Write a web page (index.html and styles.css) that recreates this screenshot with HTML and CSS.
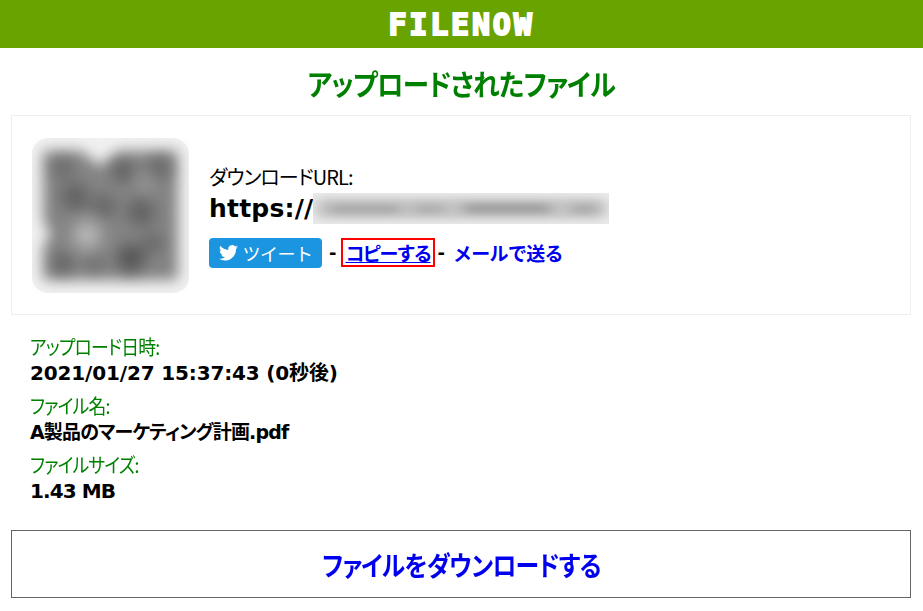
FILE: index.html
```html
<!DOCTYPE html>
<html lang="ja">
<head>
    <meta charset="UTF-8">
    <title>FILENOW - アップロードされたファイル</title>
    <link rel="stylesheet" href="styles.css">
</head>
<body>

<header class="site-header">
    <span class="logo">FILENOW</span>
</header>

<h1 class="page-title"><span>アップロードされたファイル</span></h1>

<section class="url-card">
    <div class="qr-thumb">
        <svg width="157" height="155" viewBox="0 0 157 155">
            <defs>
                <filter id="blur-qr" x="-20%" y="-20%" width="140%" height="140%">
                    <feGaussianBlur stdDeviation="7"/>
                </filter>
                <filter id="blur-spot" x="-50%" y="-50%" width="200%" height="200%">
                    <feGaussianBlur stdDeviation="8"/>
                </filter>
            </defs>
            <rect width="157" height="155" rx="16" fill="#f1f1f1"/>
            <g filter="url(#blur-qr)">
                <path fill="#848484" d="M11 13H50L68 28L86 13H146V142H11V108L19 96L11 84Z"/>
            </g>
            <g filter="url(#blur-spot)">
                <circle cx="55" cy="97" r="14" fill="#b8b8b8"/>
                <circle cx="31" cy="30" r="10" fill="#666666"/>
                <circle cx="91" cy="33" r="10" fill="#585858"/>
                <circle cx="127" cy="30" r="11" fill="#666666"/>
                <circle cx="43" cy="59" r="14" fill="#626262"/>
                <circle cx="72" cy="68" r="11" fill="#626262"/>
                <circle cx="109" cy="74" r="14" fill="#626262"/>
                <circle cx="121" cy="105" r="9" fill="#5e5e5e"/>
                <circle cx="99" cy="120" r="14" fill="#545454"/>
                <circle cx="31" cy="125" r="10" fill="#5e5e5e"/>
                <circle cx="63" cy="125" r="8" fill="#686868"/>
                <circle cx="114" cy="45" r="6" fill="#a8a8a8"/>
            </g>
        </svg>
    </div>
    <div class="url-info">
        <div class="url-label">ダウンロードURL:</div>
        <div class="url-value">
            <span class="url-scheme">https://</span>
            <svg class="url-blur" width="296" height="31" viewBox="0 0 296 31">
                <defs>
                    <filter id="blur-url" x="-10%" y="-60%" width="120%" height="220%">
                        <feGaussianBlur stdDeviation="7 4"/>
                    </filter>
                </defs>
                <rect width="296" height="31" fill="#ebebeb"/>
                <g filter="url(#blur-url)">
                    <rect x="2" y="5" width="292" height="21" rx="8" fill="#c4c4c4"/>
                    <rect x="16" y="12" width="72" height="8" rx="4" fill="#a0a0a0"/>
                    <rect x="100" y="12" width="32" height="8" rx="4" fill="#a8a8a8"/>
                    <rect x="150" y="11" width="88" height="9" rx="4" fill="#949494"/>
                    <rect x="258" y="12" width="26" height="8" rx="4" fill="#a0a0a0"/>
                </g>
            </svg>
        </div>
        <div class="url-actions">
            <a class="tweet-btn" href="#">
                <svg width="19" height="16" viewBox="0 0 24 20">
                    <path fill="#fff" d="M24 2.400a9.800 9.800 0 0 1-2.800.8A4.900 4.900 0 0 0 23.300.5a9.800 9.800 0 0 1-3.100 1.200A4.900 4.900 0 0 0 11.800 6.100 13.900 13.900 0 0 1 1.700.9a4.900 4.900 0 0 0 1.500 6.600A4.900 4.900 0 0 1 1 6.900v.1a4.900 4.900 0 0 0 3.900 4.800 4.900 4.900 0 0 1-2.200.1 4.900 4.900 0 0 0 4.600 3.400A9.900 9.900 0 0 1 0 17.300 13.900 13.900 0 0 0 7.500 19.500c9.100 0 14-7.500 14-14v-.6A10 10 0 0 0 24 2.400z"/>
                </svg>
                <span>ツイート</span>
            </a>
            <span class="sep">-</span>
            <a class="copy-link" href="#">コピーする</a>
            <span class="sep">-</span>
            <a class="mail-link" href="#">メールで送る</a>
        </div>
    </div>
</section>

<dl class="file-info">
    <dt>アップロード日時:</dt>
    <dd class="file-date">2021/01/27 15:37:43 (0秒後)</dd>
    <dt>ファイル名:</dt>
    <dd class="file-name">A製品のマーケティング計画.pdf</dd>
    <dt>ファイルサイズ:</dt>
    <dd class="file-size">1.43 MB</dd>
</dl>

<a class="download-btn" href="#"><span>ファイルをダウンロードする</span></a>

</body>
</html>
```

FILE: styles.css
```css
body {
    margin: 0;
    background: #ffffff;
    color: #000000;
    font-family: 'DejaVu Sans', 'Noto Sans CJK JP', sans-serif;
}

a {
    color: #0000ee;
}

.site-header {
    height: 48px;
    background: #69a300;
    display: flex;
    align-items: center;
    justify-content: center;
}

.logo {
    color: #ffffff;
    font-family: 'DejaVu Sans Mono', monospace;
    font-size: 30px;
    font-weight: bold;
    letter-spacing: 2.8px;
    -webkit-text-stroke: 2px #ffffff;
}

.page-title {
    margin: 0;
    padding: 17px 0 14px;
    height: 36px;
    line-height: 36px;
    text-align: center;
    font-family: 'Noto Sans CJK JP', sans-serif;
    font-feature-settings: "palt";
    font-size: 29px;
    font-weight: bold;
    letter-spacing: -0.8px;
    color: #008000;
}

.page-title span {
    display: inline-block;
    transform: scaleX(0.914);
}

.url-card {
    margin: 0 12px 0 11px;
    height: 198px;
    border: 1px solid #eeeeee;
    display: flex;
    align-items: center;
    padding-left: 20px;
    gap: 20px;
}

.qr-thumb {
    width: 157px;
    height: 155px;
}

.url-label {
    font-family: 'Noto Sans CJK JP', sans-serif;
    font-feature-settings: "palt";
    font-size: 20px;
    line-height: 28px;
    letter-spacing: -0.9px;
}

.url-value {
    display: flex;
    align-items: center;
    height: 31px;
    font-size: 25px;
    font-weight: bold;
    margin-top: 2px;
}

.url-scheme {
    letter-spacing: 0.2px;
}

.url-actions {
    display: flex;
    align-items: center;
    margin-top: 14px;
    font-size: 18px;
    font-weight: bold;
}

.tweet-btn {
    width: 113px;
    height: 30px;
    background: #1b95e0;
    border-radius: 4px;
    color: #ffffff;
    font-family: 'Noto Sans CJK JP', sans-serif;
    font-size: 18px;
    font-weight: normal;
    letter-spacing: -0.5px;
    text-decoration: none;
    display: flex;
    align-items: center;
    justify-content: center;
    gap: 5px;
}

.sep {
    margin: 0 5px 0 7px;
}

.copy-link {
    font-family: 'Noto Sans CJK JP', sans-serif;
    border: 2px solid #ff0000;
    padding: 0 2px;
    font-size: 19px;
    line-height: 25px;
    letter-spacing: -2px;
}

.copy-link + .sep {
    margin: 0 8px 0 3px;
}

.mail-link {
    font-family: 'Noto Sans CJK JP', sans-serif;
    text-decoration: none;
    font-size: 19px;
    letter-spacing: -0.7px;
}

.file-info {
    margin: 18px 0 0 30px;
}

.file-info dt {
    width: fit-content;
    color: #008000;
    font-family: 'Noto Sans CJK JP', sans-serif;
    font-feature-settings: "palt";
    font-size: 20px;
    line-height: 27px;
    letter-spacing: -0.9px;
    transform: scaleX(0.89);
    transform-origin: left;
}

.file-info dd {
    margin: 0 0 6px;
    font-size: 20px;
    font-weight: bold;
    line-height: 26px;
}

.file-info .file-date {
    letter-spacing: -0.15px;
}

.file-info .file-name {
    font-size: 19px;
    font-feature-settings: "palt";
    letter-spacing: -0.85px;
}

.file-info .file-size {
    letter-spacing: -0.9px;
}

.download-btn {
    display: flex;
    align-items: center;
    justify-content: center;
    margin: 26px 12px 0 11px;
    height: 66px;
    border: 1px solid #666666;
    font-family: 'Noto Sans CJK JP', sans-serif;
    font-feature-settings: "palt";
    font-size: 27px;
    font-weight: bold;
    letter-spacing: -0.8px;
    text-decoration: none;
}

.download-btn span {
    transform: scaleX(0.885);
}
```
